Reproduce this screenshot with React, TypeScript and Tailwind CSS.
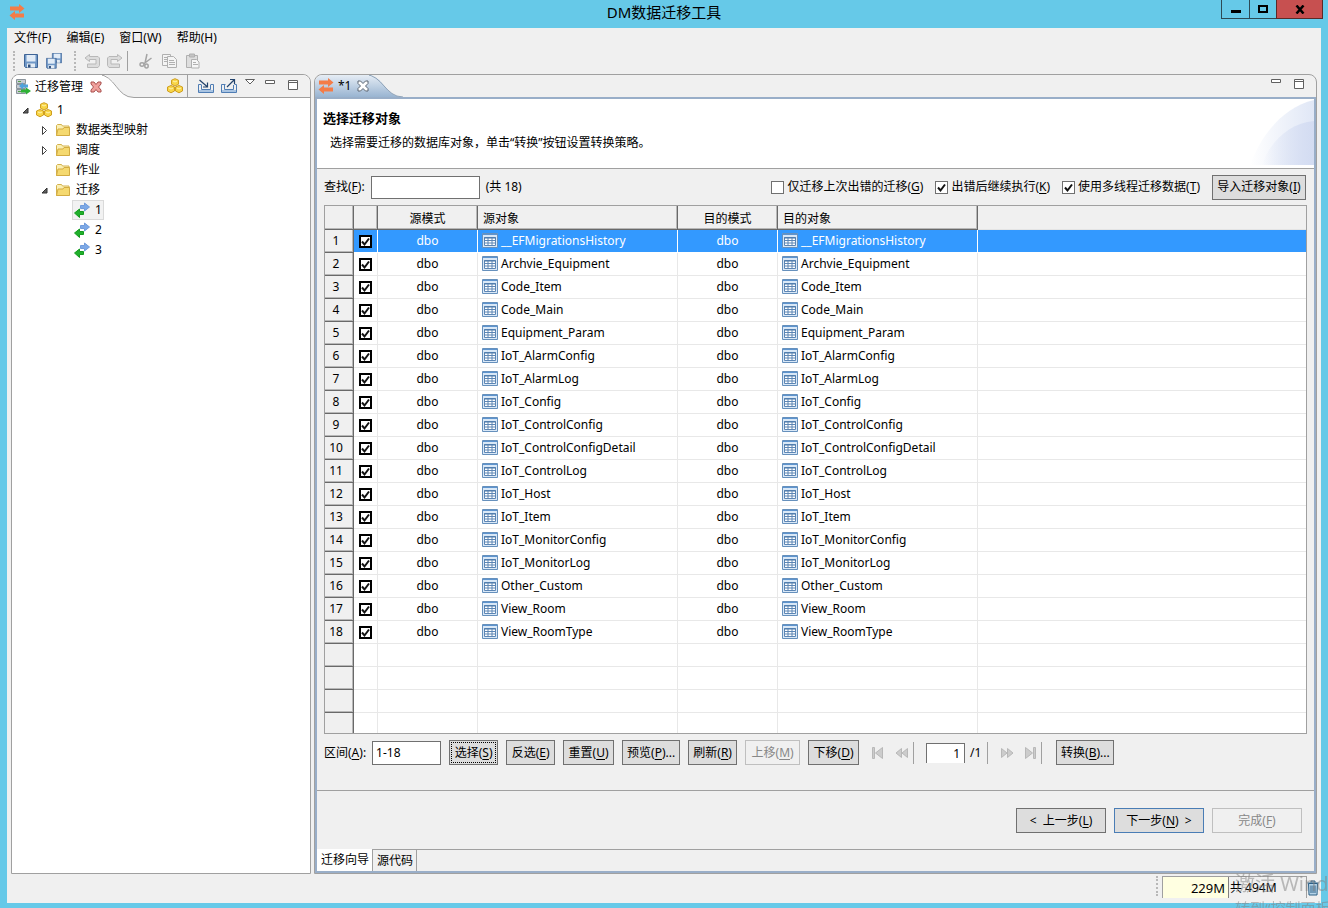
import { ReactNode } from 'react';

const tables = [
  '__EFMigrationsHistory',
  'Archvie_Equipment',
  'Code_Item',
  'Code_Main',
  'Equipment_Param',
  'IoT_AlarmConfig',
  'IoT_AlarmLog',
  'IoT_Config',
  'IoT_ControlConfig',
  'IoT_ControlConfigDetail',
  'IoT_ControlLog',
  'IoT_Host',
  'IoT_Item',
  'IoT_MonitorConfig',
  'IoT_MonitorLog',
  'Other_Custom',
  'View_Room',
  'View_RoomType'
];

const emptyRows = [19, 20, 21, 22];

const menus = ['文件(F)', '编辑(E)', '窗口(W)', '帮助(H)'];

/* ---------- Icons ---------- */

function AppIcon() {
  return (
    <svg width="16" height="16" viewBox="0 0 16 16" fill="#f47c48">
      <path d="M1 2.500h9V0L15.500 4.500 10 9V6.500H1z" />
      <path d="M15 9.500H6V7L0.500 11.500 6 16V13.500h9z" />
    </svg>
  );
}

function Disk({ x, y, s }: { x: number; y: number; s: number }) {
  return (
    <g transform={`translate(${x} ${y}) scale(${s})`}>
      <path d="M0.500 0.500h13v13h-12l-1-1z" fill="#6f97c6" stroke="#3f6496" />
      <rect x="2.500" y="1" width="9" height="6.500" fill="#e2ecf7" />
      <rect x="3" y="9.500" width="8" height="4" fill="#e4ecf4" />
      <rect x="4" y="10.500" width="2.500" height="3" fill="#2f4f7d" />
    </g>
  );
}

function SaveIcon() {
  return (
    <svg width="16" height="16" viewBox="0 0 16 16">
      <Disk x={1} y={1} s={1} />
    </svg>
  );
}

function SaveAllIcon() {
  return (
    <svg width="16" height="16" viewBox="0 0 16 16">
      <Disk x={6} y={0} s={0.72} />
      <Disk x={0} y={5} s={0.76} />
    </svg>
  );
}

function UndoIcon({ flip = false }: { flip?: boolean }) {
  return (
    <svg width="16" height="16" viewBox="0 0 16 16" className={flip ? '-scale-x-100' : ''}>
      <path
        d="M5.500 1.500L1 5l4.500 3.500V6.500h6.500v4.500H3.500v3.500H14l1.500-2V5l-1.500-1.500H5.500z"
        fill="#dcdcdc"
        stroke="#b8b8b8"
      />
    </svg>
  );
}

function CutIcon() {
  return (
    <svg width="16" height="16" viewBox="0 0 16 16" fill="none" stroke="#a4a4a4" strokeWidth="1.500">
      <path d="M9 1L7 10M13.500 5L5.500 11" />
      <ellipse cx="4" cy="11.500" rx="2" ry="1.700" />
      <ellipse cx="8.500" cy="13" rx="1.700" ry="2" />
    </svg>
  );
}

function CopyIcon() {
  return (
    <svg width="16" height="16" viewBox="0 0 16 16" fill="#f4f4f4" stroke="#b0b0b0">
      <path d="M0.500 1.500h8v11h-8z" />
      <path d="M2 4.500h4M2 6.500h4M2 8.500h4" />
      <path d="M5.500 3.500h6l3 3v8h-9z" />
      <path d="M7 7.500h5M7 9.500h6M7 11.500h6" />
    </svg>
  );
}

function PasteIcon() {
  return (
    <svg width="16" height="16" viewBox="0 0 16 16" fill="#dedede" stroke="#b0b0b0">
      <path d="M1.500 2.500h11v12h-11z" />
      <path d="M4.500 1h5v3h-5z" fill="#c4c4c4" />
      <path d="M6.500 6.500h5l2.500 2.500v6h-7.500z" fill="#f6f6f6" />
      <path d="M8 9.500h3M8 11.500h5" />
    </svg>
  );
}

function ViewIcon() {
  return (
    <svg width="16" height="16" viewBox="0 0 16 16">
      <path d="M1.500 0.500h9v4h-9zM1.500 5.500h9v4h-9zM1.500 10.500h9v4h-9z" fill="#c6ccd2" stroke="#8b949c" />
      <path d="M3 2.500h3M3 12.500h3" stroke="#55a04a" />
      <path d="M13 5.500H8V3.500L4 7l4 3.500V8.500h5z" fill="#4fa3dc" />
      <path d="M6 10.500h5V8.500l5 3.500-5 3.500v-2H6z" fill="#2eb135" />
    </svg>
  );
}

function RedCloseIcon() {
  return (
    <svg width="12" height="12" viewBox="0 0 12 12">
      <path
        d="M1 1h3l2 2.500L8 1h3v2L8.500 6 11 9v2H8L6 8.500 4 11H1V9l2.500-3L1 3z"
        fill="#f0a09c"
        stroke="#a8514e"
      />
    </svg>
  );
}

function TabCloseIcon() {
  return (
    <svg width="12" height="12" viewBox="0 0 12 12">
      <path
        d="M1 1h2.500L6 3.500 8.500 1H11v2.500L8.500 6 11 8.500V11H8.500L6 8.500 3.500 11H1V8.500L3.500 6 1 3.500z"
        fill="#fff"
        stroke="#5b6572"
      />
    </svg>
  );
}

function CubesIcon() {
  const cube = 'M0.500 2L4 0.500 7.500 2v4L4 7.800 0.500 6z';
  return (
    <svg width="16" height="16" viewBox="0 0 16 16" fill="#f8d546" stroke="#cf9f22">
      <path d={cube} transform="translate(4 0.200)" />
      <path d={cube} transform="translate(0 7)" />
      <path d={cube} transform="translate(8 7)" />
      <path d="M6 3l2 1 2-1M2 10l2 1 2-1M10 10l2 1 2-1" stroke="#fff3b0" fill="none" />
    </svg>
  );
}

function ImportIcon() {
  return (
    <svg width="16" height="16" viewBox="0 0 16 16" fill="none">
      <path d="M3.500 6.500h-3v8h15v-8h-3" stroke="#4f7db4" />
      <path d="M3.500 7v4.500h9V7" stroke="#4f7db4" />
      <path d="M1 13h14" stroke="#a9c4e2" strokeWidth="2" />
      <path d="M1.500 2l7.500 6.500M9.500 4.500v4.500H5" stroke="#23436c" strokeWidth="1.200" />
    </svg>
  );
}

function ExportIcon() {
  return (
    <svg width="16" height="16" viewBox="0 0 16 16" fill="none">
      <path d="M4.500 6.500h-4v8h15v-8h-2" stroke="#4f7db4" />
      <path d="M3.500 7v4.500h9V7" stroke="#4f7db4" />
      <path d="M1 13h14" stroke="#a9c4e2" strokeWidth="2" />
      <path d="M6 9l7-7M9 1.500h4.500V6" stroke="#23436c" strokeWidth="1.200" />
    </svg>
  );
}

function MinimizeIcon() {
  return (
    <svg width="10" height="10" viewBox="0 0 10 10">
      <path d="M0.500 0.500h9v3h-9z" fill="#fff" stroke="#606060" />
    </svg>
  );
}

function MaximizeIcon() {
  return (
    <svg width="10" height="10" viewBox="0 0 10 10" stroke="#606060">
      <path d="M0.500 0.500h9v9h-9z" fill="#fff" />
      <path d="M0 2.500h10" />
    </svg>
  );
}

function FolderIcon() {
  return (
    <svg width="16" height="16" viewBox="0 0 16 16">
      <path d="M1.500 13.500v-10l1-1h4l1 1.500h6.500v9.500z" fill="#fbf0b4" stroke="#d3b14e" />
      <path d="M1.500 13.500L3 7h5l1-1.500h5.500v8z" fill="#f5d970" stroke="#d3ac42" />
    </svg>
  );
}

function TransferIcon() {
  return (
    <svg width="16" height="16" viewBox="0 0 16 16">
      <path d="M6.500 3.500h4V1L15.500 5l-5 4V6.500h-4z" fill="#7ca8e6" stroke="#6f9bdb" />
      <path d="M9.500 9.500h-4V7L0.500 11l5 4.500V12.500h4z" fill="#1fb02a" stroke="#159a20" />
    </svg>
  );
}

function Twisty({ open }: { open: boolean }) {
  return (
    <svg width="9" height="9" viewBox="0 0 9 9">
      {open ? (
        <path d="M7 2v5H2z" fill="#606060" stroke="#303030" />
      ) : (
        <path d="M2.500 0.500v8L6.500 4.500z" fill="#fff" stroke="#404040" />
      )}
    </svg>
  );
}

function TableIcon() {
  return (
    <svg width="16" height="16" viewBox="0 0 16 16" className="shrink-0">
      <path d="M0.500 0.500h15v14h-15z" fill="#d9e8f7" stroke="#6690bc" />
      <path d="M1 1.500h14" stroke="#5d94cf" />
      <path d="M2.500 4.500h11v8h-11z" fill="#fff" stroke="#5c86b5" />
      <path d="M2 5h12" stroke="#4776a8" />
      <path d="M2.500 7.500h11M2.500 10h11M6 5v7.500M10 5v7.500" stroke="#5c86b5" />
    </svg>
  );
}

function PageIcon({ bar, flip }: { bar: boolean; flip: boolean }) {
  return (
    <svg width="14" height="14" viewBox="0 0 14 14" fill="#cccccc" stroke="#b8b8b8" className={flip ? '-scale-x-100' : ''}>
      {bar ? (
        <>
          <path d="M1.500 1.500h2v11h-2z" />
          <path d="M11.500 1.500v11L4.500 7z" />
        </>
      ) : (
        <>
          <path d="M6.500 2.500v9L1 7z" />
          <path d="M12.500 2.500v9L7 7z" />
        </>
      )}
    </svg>
  );
}

function TrashIcon() {
  return (
    <svg width="12" height="16" viewBox="0 0 12 16" fill="#b4d3e8" stroke="#2d6086">
      <path d="M0.500 3h11M4 2.500V1h4v1.500" />
      <path d="M1.500 3.500h9l-0.500 11.500H2z" />
      <path d="M4 5.500V13M6 5.500V13M8 5.500V13" />
    </svg>
  );
}

/* ---------- Small parts ---------- */

function Mnemonic({ text }: { text: string }) {
  const at = text.indexOf('(') + 1;
  return (
    <span className="whitespace-pre">
      {text.slice(0, at)}
      <span className="underline underline-offset-2">{text[at]}</span>
      {text.slice(at + 1)}
    </span>
  );
}

function PushButton({ text, width, disabled = false, focused = false }: {
  text: string;
  width: string;
  disabled?: boolean;
  focused?: boolean;
}) {
  const look = disabled
    ? 'border-[#bfbfbf] bg-[#f0f0f0] text-[#888888]'
    : 'border-[#707070] bg-[#dddddd] text-black';
  return (
    <button disabled={disabled} className={`flex h-[25px] shrink-0 border p-px ${look} ${width}`}>
      <span className={`flex h-full w-full items-center justify-center ${focused ? 'border border-dotted border-black' : ''}`}>
        <Mnemonic text={text} />
      </span>
    </button>
  );
}

function Tick({ className }: { className: string }) {
  return (
    <svg viewBox="0 0 13 13" fill="none" stroke="#111" strokeWidth="2" className={`pointer-events-none absolute inset-0 size-[13px] ${className}`}>
      <path d="M3 6.500l2.500 3L10 3.500" />
    </svg>
  );
}

function Option({ text, checked = false }: { text: string; checked?: boolean }) {
  return (
    <label className="flex items-center gap-[3px]">
      <span className="relative size-[13px]">
        <input type="checkbox" defaultChecked={checked} className="peer block size-[13px] appearance-none border border-[#707070] bg-white" />
        <Tick className="hidden peer-checked:block" />
      </span>
      <Mnemonic text={text} />
    </label>
  );
}

function Grip() {
  return <span className="h-5 border-l-2 border-dotted border-[#b8b8b8]" />;
}

function TreeRow({ indent, open, icon, text, selected = false }: {
  indent: string;
  open?: boolean;
  icon: ReactNode;
  text: string;
  selected?: boolean;
}) {
  return (
    <li className={`flex h-5 items-center ${indent}`}>
      <span className="flex w-[13px] shrink-0 items-center">{open !== undefined && <Twisty open={open} />}</span>
      <span className={`flex h-5 items-center gap-[5px] border px-px ${selected ? 'border-[#dadada] bg-[#f2f2f2]' : 'border-transparent'}`}>
        {icon}
        <span>{text}</span>
      </span>
    </li>
  );
}

function HeadCell({ text = '', align = 'text-center' }: { text?: string; align?: string }) {
  return (
    <th className={`h-6 border-r border-b border-[#696969] bg-[#f0f0f0] px-[5px] pt-[3px] pb-0 font-normal whitespace-nowrap shadow-[inset_-1px_-1px_0_#b8b8b8] ${align}`}>
      {text}
    </th>
  );
}

function ObjectCell({ name, line }: { name: string; line: string }) {
  return (
    <td className={`border-r border-b px-1 ${line}`}>
      <span className="flex items-center gap-[3px]">
        <TableIcon />
        <span>{name}</span>
      </span>
    </td>
  );
}

/* ---------- Panels ---------- */

function Navigator() {
  return (
    <aside className="flex w-[300px] shrink-0 flex-col rounded-t-lg border border-[#a0a0a0] bg-white">
      <div className="flex h-[23px] shrink-0 rounded-t-lg bg-[#f0f0f0]">
        <div className="flex items-center rounded-tl-lg bg-white pl-[3px]">
          <ViewIcon />
          <span className="ml-1 mr-[7px]">迁移管理</span>
          <button aria-label="关闭"><RedCloseIcon /></button>
        </div>
        <svg width="32" height="23" viewBox="0 0 32 23" className="shrink-0">
          <path d="M0 0C14 0 14 22.500 32 22.500V23H0z" fill="#fff" />
          <path d="M-4 -0.500C14 0 14 22.500 32 22.500" fill="none" stroke="#a0a0a0" />
        </svg>
        <div className="flex flex-1 items-start justify-end border-b border-[#a0a0a0] pr-3">
          <button aria-label="连接" className="mr-1 pt-[3px]"><CubesIcon /></button>
          <span className="mr-[10px] h-full border-l border-[#a0a0a0]" />
          <button aria-label="导入" className="mr-[7px] pt-[3px]"><ImportIcon /></button>
          <button aria-label="导出" className="mr-2 pt-[3px]"><ExportIcon /></button>
          <button aria-label="菜单" className="mr-[10px] pt-1">
            <svg width="10" height="6" viewBox="0 0 10 6">
              <path d="M0.500 0.500h9L5 5z" fill="#fff" stroke="#606060" />
            </svg>
          </button>
          <button aria-label="最小化" className="mr-[13px] pt-[5px]"><MinimizeIcon /></button>
          <button aria-label="最大化" className="pt-[5px]"><MaximizeIcon /></button>
        </div>
      </div>
      <ul className="flex-1 pt-[2px]">
        <TreeRow indent="pl-[9px]" open icon={<CubesIcon />} text="1" />
        <TreeRow indent="pl-[28px]" open={false} icon={<FolderIcon />} text="数据类型映射" />
        <TreeRow indent="pl-[28px]" open={false} icon={<FolderIcon />} text="调度" />
        <TreeRow indent="pl-[28px]" icon={<FolderIcon />} text="作业" />
        <TreeRow indent="pl-[28px]" open icon={<FolderIcon />} text="迁移" />
        <TreeRow indent="pl-[47px]" icon={<TransferIcon />} text="1" selected />
        <TreeRow indent="pl-[47px]" icon={<TransferIcon />} text="2" />
        <TreeRow indent="pl-[47px]" icon={<TransferIcon />} text="3" />
      </ul>
    </aside>
  );
}

function ObjectTable() {
  return (
    <div className="mx-[7px] min-h-0 flex-1 overflow-hidden border border-[#a0a0a0] bg-white">
      <table className="w-full table-fixed border-separate border-spacing-0">
        <colgroup>
          <col className="w-[29px]" />
          <col className="w-[24px]" />
          <col className="w-[100px]" />
          <col className="w-[200px]" />
          <col className="w-[100px]" />
          <col className="w-[200px]" />
          <col />
        </colgroup>
        <thead>
          <tr>
            <HeadCell />
            <HeadCell />
            <HeadCell text="源模式" />
            <HeadCell text="源对象" align="text-left" />
            <HeadCell text="目的模式" />
            <HeadCell text="目的对象" align="text-left" />
            <th className="border-b border-[#e4e4e4] bg-[#f0f0f0]" />
          </tr>
        </thead>
        <tbody>
          {tables.map((name, i) => {
            const line = i === 0 ? 'border-white' : 'border-[#e8e8e8]';
            return (
              <tr key={name} className={i === 0 ? 'bg-[#3399ff] text-white' : ''}>
                <th className="h-[23px] border-r border-b border-[#696969] bg-[#f0f0f0] p-0 pr-[6px] text-center font-normal text-black shadow-[inset_-1px_-1px_0_#b8b8b8]">
                  {i + 1}
                </th>
                <td className={`border-r border-b pl-[5px] ${line}`}>
                  <span className="relative block size-[13px]">
                    <input type="checkbox" defaultChecked aria-label={name} className="block size-[13px] appearance-none border-2 border-black bg-white" />
                    <Tick className="block" />
                  </span>
                </td>
                <td className={`border-r border-b text-center ${line}`}>dbo</td>
                <ObjectCell name={name} line={line} />
                <td className={`border-r border-b text-center ${line}`}>dbo</td>
                <ObjectCell name={name} line={line} />
                <td className={`border-b ${line}`} />
              </tr>
            );
          })}
          {emptyRows.map((n) => (
            <tr key={n}>
              <th className="h-[23px] border-r border-b border-[#696969] bg-[#f0f0f0] p-0 shadow-[inset_-1px_-1px_0_#b8b8b8]" />
              <td className="border-r border-b border-[#e8e8e8]" />
              <td className="border-r border-b border-[#e8e8e8]" />
              <td className="border-r border-b border-[#e8e8e8]" />
              <td className="border-r border-b border-[#e8e8e8]" />
              <td className="border-r border-b border-[#e8e8e8]" />
              <td className="border-b border-[#e8e8e8]" />
            </tr>
          ))}
        </tbody>
      </table>
    </div>
  );
}

function RangeBar() {
  return (
    <div className="flex shrink-0 items-center gap-2 px-[7px] pt-[6px] pb-[25px]">
      <label className="flex items-center gap-[6px]">
        <Mnemonic text="区间(A):" />
        <input defaultValue="1-18" className="h-6 w-[69px] border border-[#707070] bg-white px-[3px]" />
      </label>
      <PushButton text="选择(S)" width="w-[49px]" focused />
      <PushButton text="反选(E)" width="w-[49px]" />
      <PushButton text="重置(U)" width="w-[51px]" />
      <PushButton text="预览(P)..." width="w-[58px]" />
      <PushButton text="刷新(R)" width="w-[49px]" />
      <PushButton text="上移(M)" width="w-[55px]" disabled />
      <PushButton text="下移(D)" width="w-[51px]" />
      <div className="ml-1 flex items-center">
        <button disabled aria-label="首页" className="mr-[10px]"><PageIcon bar flip={false} /></button>
        <button disabled aria-label="上一页"><PageIcon bar={false} flip={false} /></button>
        <span className="ml-1 mr-3 h-[22px] border-l border-[#a0a0a0]" />
        <input aria-label="页码" defaultValue="1" className="h-5 w-[39px] border border-b-0 border-[#707070] bg-white px-1 text-right" />
        <span className="ml-[5px] mr-[6px]">/1</span>
        <span className="mr-3 h-[22px] border-l border-[#a0a0a0]" />
        <button disabled aria-label="下一页" className="mr-[9px]"><PageIcon bar={false} flip /></button>
        <button disabled aria-label="末页"><PageIcon bar flip /></button>
        <span className="ml-1 mr-[14px] h-[22px] border-l border-[#a0a0a0]" />
        <PushButton text="转换(B)..." width="w-[58px]" />
      </div>
    </div>
  );
}

function Editor() {
  return (
    <main className="flex min-w-0 flex-1 flex-col rounded-t-lg border border-[#a0a0a0] bg-[#f0f0f0]">
      <div className="flex h-[22px] shrink-0 rounded-t-lg">
        <div className="flex items-center rounded-tl-lg bg-linear-to-b from-[#e6edf5] to-[#99b4d1] pl-[3px]">
          <AppIcon />
          <span className="ml-1 mr-[6px]">*1</span>
          <button aria-label="关闭"><TabCloseIcon /></button>
        </div>
        <svg width="34" height="22" viewBox="0 0 34 22" className="shrink-0">
          <defs>
            <linearGradient id="tab" x1="0" y1="0" x2="0" y2="1">
              <stop offset="0" stopColor="#e6edf5" />
              <stop offset="1" stopColor="#99b4d1" />
            </linearGradient>
          </defs>
          <path d="M0 0C14 0 16 22 34 22H0z" fill="url(#tab)" />
          <path d="M-4 -0.500C14 0 16 22 34 22" fill="none" stroke="#8fa3b8" />
        </svg>
        <div className="flex flex-1 items-start justify-end gap-[13px] pt-1 pr-3">
          <button aria-label="最小化"><MinimizeIcon /></button>
          <button aria-label="最大化"><MaximizeIcon /></button>
        </div>
      </div>

      <div className="flex min-h-0 flex-1 flex-col border-2 border-[#99aec8]">
        {/* Wizard title */}
        <header className="relative h-[70px] shrink-0 border-b border-[#a0a0a0] bg-white px-[6px] pt-[11px]">
          <h1 className="text-[13px] leading-4 font-bold">选择迁移对象</h1>
          <p className="mt-[9px] pl-[7px] leading-4">选择需要迁移的数据库对象，单击“转换”按钮设置转换策略。</p>
          <svg width="66" height="66" viewBox="0 0 66 66" className="absolute top-0 right-0">
            <defs>
              <linearGradient id="glow" x1="0" y1="0" x2="1" y2="0">
                <stop offset="0" stopColor="#fff" />
                <stop offset="1" stopColor="#e0e7f6" />
              </linearGradient>
              <linearGradient id="glow-inner" x1="0" y1="0" x2="1" y2="0">
                <stop offset="0" stopColor="#d3dcf2" stopOpacity="0" />
                <stop offset="1" stopColor="#d3dcf2" />
              </linearGradient>
            </defs>
            <path d="M2 66C14 34 36 8 66 1v65z" fill="url(#glow)" />
            <path d="M14 66C22 42 42 24 66 22v44z" fill="url(#glow-inner)" />
          </svg>
        </header>

        {/* Filter */}
        <div className="flex h-9 shrink-0 items-center px-[7px]">
          <label className="mr-[6px] flex items-center gap-[6px]">
            <Mnemonic text="查找(F):" />
            <input className="h-[23px] w-[109px] border border-[#707070] bg-white px-1" />
          </label>
          <span>(共 18)</span>
          <div className="ml-auto flex items-center gap-3 pr-px">
            <Option text="仅迁移上次出错的迁移(G)" />
            <Option text="出错后继续执行(K)" checked />
            <Option text="使用多线程迁移数据(T)" checked />
            <PushButton text="导入迁移对象(I)" width="w-[94px]" />
          </div>
        </div>

        <ObjectTable />
        <RangeBar />

        {/* Wizard buttons */}
        <div className="flex shrink-0 justify-end gap-2 border-t border-[#a0a0a0] px-3 pt-[17px] pb-4">
          <PushButton text="<  上一步(L)" width="w-[90px]" />
          <PushButton text="下一步(N)  >" width="w-[90px] outline -outline-offset-1 outline-[#4a7db5]" />
          <PushButton text="完成(F)" width="w-[90px]" disabled />
        </div>

        {/* Page tabs */}
        <div className="flex h-[22px] shrink-0 border-t border-[#a0a0a0]">
          <button className="-mt-px border-r border-[#a0a0a0] bg-white pr-[3px] pl-1">迁移向导</button>
          <button className="border-r border-[#a0a0a0] pr-[3px] pl-1">源代码</button>
        </div>
      </div>
    </main>
  );
}

export default function App() {
  return (
    <div className="flex h-screen min-h-[600px] flex-col overflow-hidden bg-[#66c9e8] px-[7px] pb-[5px] font-['Noto_Sans','Noto_Sans_CJK_SC',sans-serif] text-[12px] leading-4 text-black">
      {/* Title bar */}
      <div className="grid h-7 shrink-0 grid-cols-3">
        <span className="pt-1 pl-[2px]"><AppIcon /></span>
        <span className="self-center pb-1 text-center text-[15px] leading-5">DM数据迁移工具</span>
        <div className="-mr-[2px] flex h-[19px] justify-end">
          <button aria-label="最小化" className="flex w-[29px] items-center justify-center border border-t-0 border-[#2d4a55]">
            <span className="mt-1 h-[3px] w-[10px] bg-black" />
          </button>
          <button aria-label="最大化" className="flex w-[26px] items-center justify-center border-b border-[#2d4a55]">
            <span className="h-2 w-[10px] border-2 border-black" />
          </button>
          <button aria-label="关闭" className="flex w-[47px] items-center justify-center border border-t-0 border-[#5a2a28] bg-[#c75050]">
            <svg width="10" height="9" viewBox="0 0 10 9" stroke="#000" strokeWidth="2.500">
              <path d="M1.500 0.500l7 8M8.500 0.500l-7 8" />
            </svg>
          </button>
        </div>
      </div>

      <div className="flex min-h-0 flex-1 flex-col bg-[#f0f0f0]">
        <nav className="flex h-5 shrink-0 items-center gap-[15px] pl-[7px]">
          {menus.map((menu) => (
            <button key={menu}>{menu}</button>
          ))}
        </nav>

        {/* Toolbar */}
        <div className="flex h-[26px] shrink-0 items-center pl-[6px]">
          <Grip />
          <button aria-label="保存" className="ml-2"><SaveIcon /></button>
          <button aria-label="全部保存" className="ml-[7px] mr-3"><SaveAllIcon /></button>
          <Grip />
          <button disabled aria-label="撤销" className="ml-2"><UndoIcon /></button>
          <button disabled aria-label="重做" className="ml-[7px] mr-1"><UndoIcon flip /></button>
          <span className="h-5 border-l border-[#a0a0a0]" />
          <button disabled aria-label="剪切" className="ml-[10px]"><CutIcon /></button>
          <button disabled aria-label="复制" className="ml-2"><CopyIcon /></button>
          <button disabled aria-label="粘贴" className="ml-[7px]"><PasteIcon /></button>
        </div>

        <div className="flex min-h-0 flex-1 gap-[3px] px-1">
          <Navigator />
          <Editor />
        </div>

        {/* Heap status */}
        <footer className="flex h-[29px] shrink-0 items-start justify-end gap-1 pt-[2px] pr-[2px]">
          <Grip />
          <div className="flex h-[22px] w-[145px] border border-b-0 border-[#a0a0a0]">
            <span className="flex flex-1 items-center justify-end border-r border-[#808080] bg-[#ffffe1] pr-[3px] text-[13px]">229M</span>
            <span className="flex w-[77px] items-center pl-px text-[12px]">共 494M</span>
          </div>
          <button aria-label="回收" className="-ml-1 pt-1"><TrashIcon /></button>
        </footer>
      </div>

      {/* Activation notice painted over the desktop */}
      <div className="pointer-events-none fixed right-0 bottom-0 h-[38px] w-[93px] overflow-hidden whitespace-nowrap text-[#808080]/50">
        <p className="text-[20px] leading-7">激活 Windows</p>
        <p className="text-[15px] leading-5">转到“控制面板”以激活</p>
      </div>
    </div>
  );
}
